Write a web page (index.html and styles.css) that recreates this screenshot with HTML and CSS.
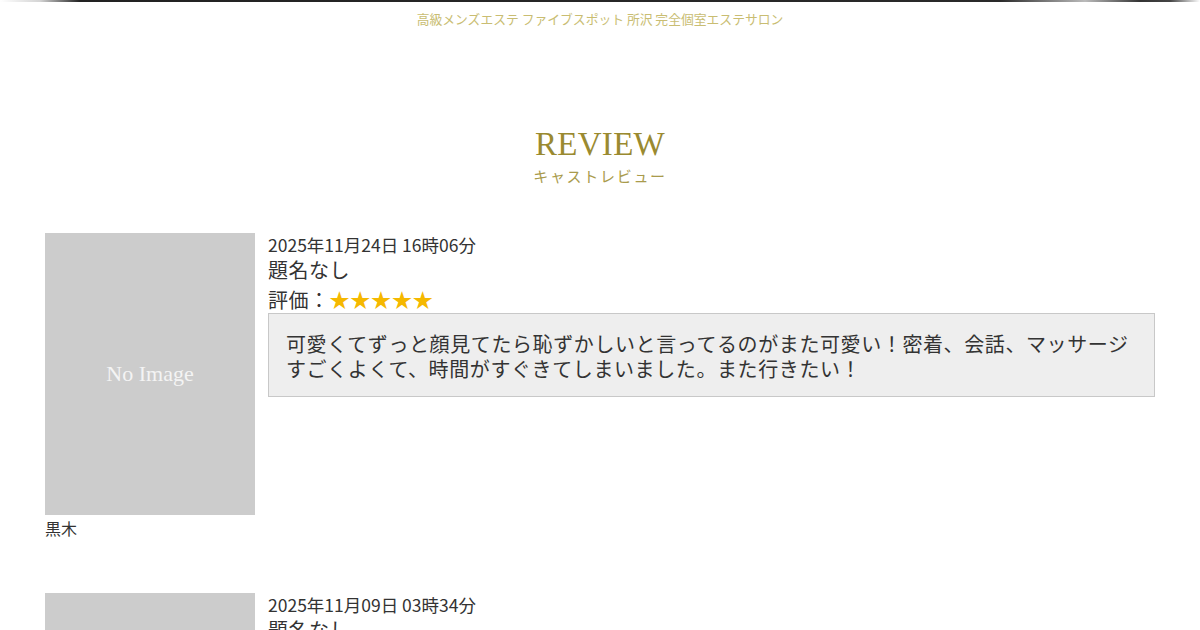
FILE: index.html
```html
<!DOCTYPE html>
<html lang="ja">
<head>
<meta charset="utf-8">
<title>REVIEW キャストレビュー</title>
<link rel="stylesheet" href="styles.css">
</head>
<body>
<div class="topbar"></div>
<p class="tagline">高級メンズエステ ファイブスポット 所沢 完全個室エステサロン</p>
<header class="section-head">
  <h1 class="section-title">REVIEW</h1>
  <p class="section-sub">キャストレビュー</p>
</header>
<main class="reviews">
  <article class="review">
    <div class="cast">
      <div class="noimage">No Image</div>
      <p class="cast-name">黒木</p>
    </div>
    <div class="review-body">
      <p class="review-date">2025年11月24日 16時06分</p>
      <p class="review-title">題名なし</p>
      <p class="review-rating">評価：<span class="stars">★★★★★</span></p>
      <div class="review-text">可愛くてずっと顔見てたら恥ずかしいと言ってるのがまた可愛い！密着、会話、マッサージすごくよくて、時間がすぐきてしまいました。また行きたい！</div>
    </div>
  </article>
  <article class="review">
    <div class="cast">
      <div class="noimage">No Image</div>
      <p class="cast-name">黒木</p>
    </div>
    <div class="review-body">
      <p class="review-date">2025年11月09日 03時34分</p>
      <p class="review-title">題名なし</p>
      <p class="review-rating">評価：<span class="stars">★★★★★</span></p>
      <div class="review-text">とても良かったです。</div>
    </div>
  </article>
</main>
</body>
</html>
```

FILE: styles.css
```css
* { box-sizing: border-box; }
html, body { margin: 0; padding: 0; background: #fff; }
body {
  font-family: "Noto Sans CJK JP", "Noto Sans", sans-serif;
  color: #333;
  overflow: hidden;
}
p { margin: 0; }

.topbar {
  height: 2px;
  background: linear-gradient(to right,
    rgba(40,40,40,0) 0px,
    rgba(40,40,40,0.2) 40px,
    #222 80px,
    #2a2a2a 1000px,
    #bbb 1085px,
    #333 1140px,
    #444 1170px,
    rgba(40,40,40,0) 1200px);
}

.tagline {
  text-align: center;
  font-size: 12.8px;
  line-height: 20px;
  margin-top: 7px;
  color: #c9bd72;
  font-family: "Noto Sans CJK JP", sans-serif;
}

.section-head {
  text-align: center;
  margin-top: 96px;
}
.section-title {
  margin: 0;
  font-family: "Liberation Serif", "DejaVu Serif", serif;
  font-weight: 400;
  font-size: 33px;
  line-height: 38px;
  color: #9a8a30;
  letter-spacing: 0.3px;
}
.section-sub {
  margin-top: 3px;
  font-size: 15px;
  line-height: 20px;
  letter-spacing: 1.7px;
  color: #a99b4c;
}

.reviews {
  margin: 47px 45px 0;
}
.review {
  display: flex;
  gap: 13px;
  margin-bottom: 52px;
}
.cast { width: 210px; flex: none; }
.noimage {
  width: 210px;
  height: 282px;
  background: #cccccc;
  color: #f4f4f4;
  display: flex;
  align-items: center;
  justify-content: center;
  font-family: "Liberation Serif", "DejaVu Serif", serif;
  font-size: 22px;
  padding-top: 0;
}
.cast-name {
  font-size: 16px;
  line-height: 26px;
}
.review-body { flex: 1; min-width: 0; }
.review-date {
  font-size: 17.5px;
  line-height: 24px;
}
.review-title {
  font-size: 20px;
  line-height: 26px;
  letter-spacing: 0.5px;
}
.review-rating {
  font-size: 20px;
  line-height: 29px;
  padding-top: 2px;
  letter-spacing: 0.5px;
}
.stars { color: #f5b800; letter-spacing: 0.8px; }
.review-text {
  margin-top: -1px;
  background: #eeeeee;
  border: 1px solid #c8c8c8;
  padding: 17px 17px 15px;
  font-size: 20px;
  line-height: 25px;
  letter-spacing: 0.6px;
  color: #333;
}
```
